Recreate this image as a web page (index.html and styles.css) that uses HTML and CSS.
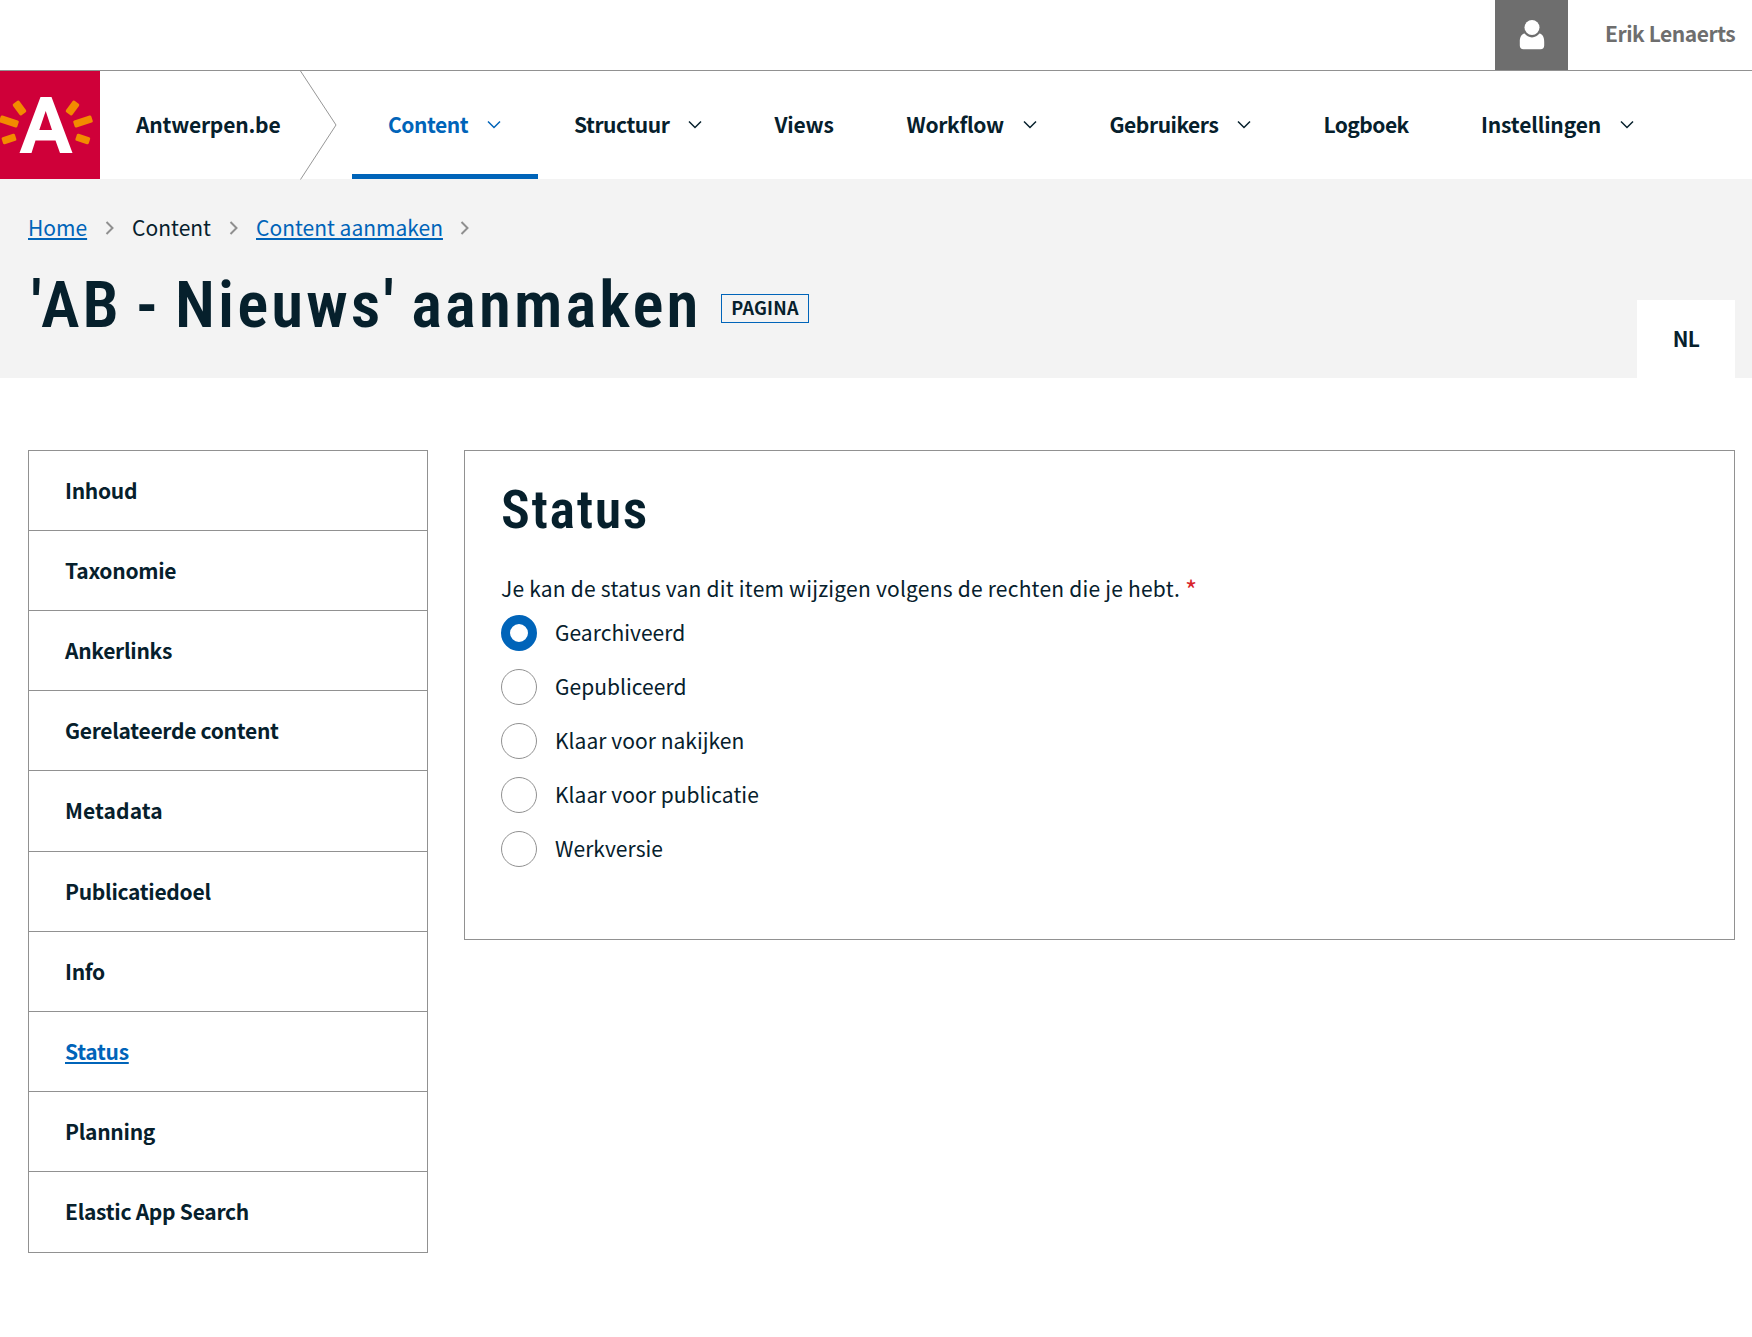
FILE: index.html
```html
<!DOCTYPE html>
<html lang="nl">
<head>
<meta charset="utf-8">
<title>'AB - Nieuws' aanmaken</title>
<link rel="stylesheet" href="styles.css">
</head>
<body>
<svg class="defs" width="0" height="0" aria-hidden="true">
  <symbol id="chevron-down" viewBox="0 0 16 16"><path d="M2 4.500 8 10.500 14 4.500" fill="none" stroke="currentColor" stroke-width="1.500"/></symbol>
  <symbol id="chevron-right" viewBox="0 0 10 16"><path d="M1.500 2 7.500 8 1.500 14" fill="none" stroke="currentColor" stroke-width="2"/></symbol>
</svg>

<div class="topbar">
  <div class="avatar">
    <svg width="26" height="30" viewBox="0 0 26 30"><path d="M5.600 13.500C2.200 14 .8 17.500.8 22v3.500Q.8 29.200 4.500 29.200h17q3.700 0 3.700-3.700V22c0-4.500-1.400-8-4.800-8.500a9 9 0 0 1-14.800 0z" fill="#fff"/><circle cx="13" cy="7.500" r="7.500" fill="#fff"/></svg>
  </div>
  <span class="user">Erik Lenaerts</span>
</div>

<header class="header">
  <svg class="logo" width="100" height="108" viewBox="0 0 100 108">
    <path d="M0 0h100v108H0z" fill="#cf0039"/>
    <path fill="#fff" fill-rule="evenodd" d="M40.500 26h11L72.500 82H60L55.500 69.500h-20L31.500 82h-12zM45.700 40 39.300 59H52z"/>
    <g fill="#f28b00">
      <rect x="-7" y="-4" width="14" height="8" rx="1.500" transform="translate(19.500 37) rotate(54)"/>
      <rect x="-9.500" y="-3.700" width="19" height="7.400" rx="1.500" transform="translate(9 50.500) rotate(18)"/>
      <rect x="-7" y="-3.700" width="14" height="7.400" rx="1.500" transform="translate(9 68) rotate(-18)"/>
      <rect x="-7" y="-4" width="14" height="8" rx="1.500" transform="translate(72.500 37) rotate(-54)"/>
      <rect x="-9.500" y="-3.700" width="19" height="7.400" rx="1.500" transform="translate(83 50.500) rotate(-18)"/>
      <rect x="-7" y="-3.700" width="14" height="7.400" rx="1.500" transform="translate(82.800 68) rotate(18)"/>
    </g>
  </svg>
  <div class="brand">Antwerpen.be</div>
  <svg class="arrow" width="37" height="109" viewBox="0 0 37 109"><path d="M.5 0 36 54 .5 108.500" fill="none" stroke="#979797"/></svg>
  <nav class="nav">
    <a class="nav-item content active">Content<svg width="16" height="16"><use href="#chevron-down"/></svg></a>
    <a class="nav-item structuur">Structuur<svg width="16" height="16"><use href="#chevron-down"/></svg></a>
    <a class="nav-item views">Views</a>
    <a class="nav-item workflow">Workflow<svg width="16" height="16"><use href="#chevron-down"/></svg></a>
    <a class="nav-item gebruikers">Gebruikers<svg width="16" height="16"><use href="#chevron-down"/></svg></a>
    <a class="nav-item logboek">Logboek</a>
    <a class="nav-item instellingen">Instellingen<svg width="16" height="16"><use href="#chevron-down"/></svg></a>
  </nav>
</header>

<section class="hero">
  <div class="hero-main">
    <div class="crumbs">
      <a class="link">Home</a><svg width="10" height="16"><use href="#chevron-right"/></svg>
      <span>Content</span><svg width="10" height="16"><use href="#chevron-right"/></svg>
      <a class="link">Content aanmaken</a><svg width="10" height="16"><use href="#chevron-right"/></svg>
    </div>
    <div class="title-row">
      <h1>'AB - Nieuws' aanmaken</h1>
      <span class="badge">PAGINA</span>
    </div>
  </div>
  <div class="lang">NL</div>
</section>

<main class="layout">
  <ul class="side">
    <li>Inhoud</li>
    <li>Taxonomie</li>
    <li>Ankerlinks</li>
    <li>Gerelateerde content</li>
    <li class="wide">Metadata</li>
    <li>Publicatiedoel</li>
    <li>Info</li>
    <li><a class="link">Status</a></li>
    <li>Planning</li>
    <li>Elastic App Search</li>
  </ul>
  <section class="panel">
    <h2>Status</h2>
    <p class="hint">Je kan de status van dit item wijzigen volgens de rechten die je hebt. <span class="req">*</span></p>
    <div class="radios">
      <label><i class="dot on"></i><span>Gearchiveerd</span></label>
      <label><i class="dot"></i><span>Gepubliceerd</span></label>
      <label><i class="dot"></i><span>Klaar voor nakijken</span></label>
      <label><i class="dot"></i><span>Klaar voor publicatie</span></label>
      <label><i class="dot"></i><span>Werkversie</span></label>
    </div>
  </section>
</main>
</body>
</html>
```
FILE: styles.css
```css
* { box-sizing: border-box; }
body {
  margin: 0;
  background: #fff;
  color: #06202c;
  font: 400 21px/24px "Noto Sans CJK SC", "Noto Sans", sans-serif;
  letter-spacing: .22px;
}
.defs { position: absolute; }
svg { display: block; flex: none; }

.topbar {
  display: flex;
  justify-content: flex-end;
  height: 71px;
  border-bottom: 1px solid #919191;
}
.avatar {
  display: flex;
  justify-content: center;
  width: 73px;
  padding: 20px 0 0 1px;
  background: #6e6e6e;
}
.user {
  width: 184px;
  padding: 21px 0 0 37px;
  color: #6e6e6e;
  font-weight: 700;
  letter-spacing: -.45px;
  white-space: nowrap;
}

.header { display: flex; height: 108px; }
.brand {
  width: 200px;
  padding: 41px 0 0 36px;
  font-weight: 700;
  letter-spacing: -.2px;
}
.arrow { overflow: visible; }
.nav { display: flex; margin-left: 15px; }
.nav-item {
  display: flex;
  justify-content: space-between;
  padding: 41px 36px 0;
  font-weight: 700;
  letter-spacing: -.45px;
  white-space: nowrap;
}
.nav-item svg { margin-top: 5px; }
.content { width: 186px; }
.structuur { width: 200.500px; }
.views { width: 132px; letter-spacing: -.15px; }
.workflow { width: 203px; letter-spacing: -.3px; }
.gebruikers { width: 214px; }
.logboek { width: 157.500px; letter-spacing: -.55px; }
.instellingen { width: 226px; letter-spacing: -.15px; }
.active { color: #0064b9; border-bottom: 5px solid #0064b9; }

.hero {
  display: flex;
  justify-content: space-between;
  align-items: flex-end;
  height: 199px;
  padding: 0 17px 0 28px;
  background: #f3f3f3;
}
.hero-main { align-self: flex-start; padding-top: 36px; }
.crumbs { display: flex; letter-spacing: 0; }
.crumbs svg { margin: 5px 17.500px 0; color: #8f8f8f; }
.link {
  color: #0064b9;
  text-decoration: underline 2px;
  text-underline-offset: 2px;
  text-decoration-skip-ink: none;
}
.title-row { display: flex; align-items: flex-start; padding-top: 19px; }
h1, h2 {
  margin: 0;
  font-family: Roboto, sans-serif;
  font-weight: 600;
  font-stretch: 85%;
  white-space: nowrap;
}
h1 {
  width: 693px;
  padding: 2px 0 0 3px;
  font-size: 65px;
  line-height: 90px;
  letter-spacing: 3.100px;
  word-spacing: -4px;
}
.badge {
  width: 88px;
  height: 29px;
  margin-top: 36px;
  border: 1px solid #0064b9;
  font-size: 18px;
  font-weight: 700;
  line-height: 25px;
  text-align: center;
}
.lang {
  width: 98px;
  height: 78px;
  padding-top: 26px;
  background: #fff;
  font-weight: 700;
  letter-spacing: -.6px;
  text-align: center;
}

.layout { display: flex; align-items: flex-start; gap: 36px; padding: 72px 17px 0 28px; }
.side {
  width: 400px;
  margin: 0;
  padding: 0;
  border: 1px solid #919191;
  list-style: none;
  font-weight: 700;
  letter-spacing: -.28px;
}
.side li { height: 80.120px; padding: 27px 36px 0; border-bottom: 1px solid #919191; }
.side li:last-child { border-bottom: 0; }
.side .wide { letter-spacing: .1px; }
.panel { flex: 1; height: 490px; padding: 24px 36px 0; border: 1px solid #919191; }
h2 { font-size: 54px; line-height: 70px; letter-spacing: 1.600px; }
.hint { margin: 31px 0 0; white-space: nowrap; }
.req { color: #d8232a; font-size: 26px; line-height: 0; vertical-align: -3px; }
.radios {
  display: flex;
  flex-direction: column;
  gap: 18px;
  padding-top: 15px;
  letter-spacing: .04px;
}
.radios label { display: flex; align-items: center; gap: 18px; height: 36px; }
.radios span { padding-bottom: 2px; }
.dot { width: 36px; height: 36px; border: 1px solid #919191; border-radius: 50%; }
.dot.on { border: 9px solid #0064b9; }
```
